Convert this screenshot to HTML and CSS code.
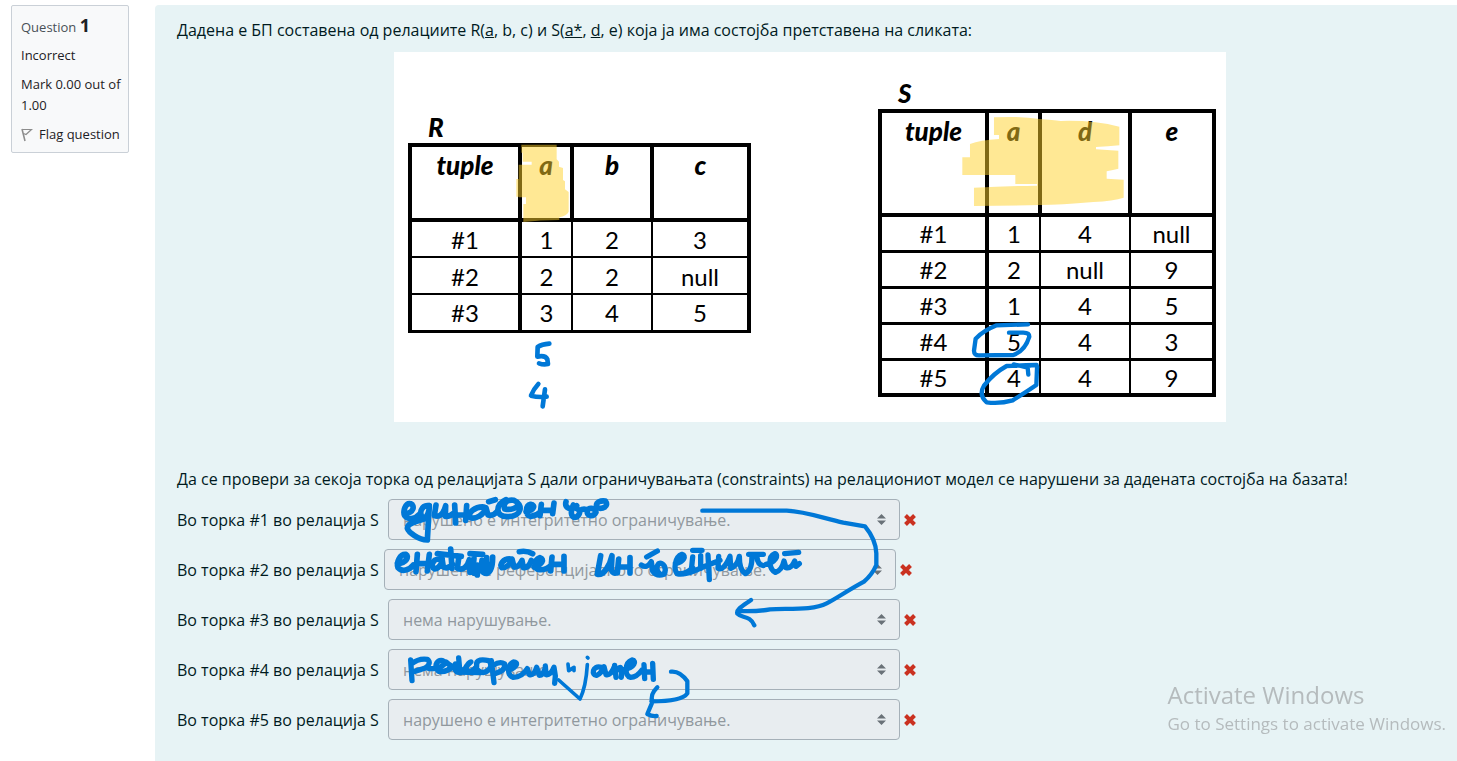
FILE: index.html
```
<!DOCTYPE html>
<html lang="mk">
<head>
<meta charset="utf-8">
<title>Question 1</title>
<link rel="stylesheet" href="styles.css">
</head>
<body>
<main class="question">
  <aside class="info" lang="en">
    <h3 class="info__title">Question <b>1</b></h3>
    <p class="info__line">Incorrect</p>
    <p class="info__line">Mark 0.00 out of 1.00</p>
    <a class="info__flag" href="#">
      <svg width="12" height="14" viewBox="0 0 12 14" fill="none" stroke="#8c8c8c" stroke-width="1.5" aria-hidden="true"><path d="M1 1 4 13"/><path d="M1.500 1.500H10.500L5 6.500 2.500 5.500" stroke-width="1.200"/></svg>
      Flag question
    </a>
  </aside>

  <section class="content">
    <p class="text">Дадена е БП составена од релациите R(<u>a</u>, b, c) и S(<u>a*</u>, <u>d</u>, e) која ја има состојба претставена на сликата:</p>

    <figure class="board">
      <table class="rel rel--r">
        <caption>R</caption>
        <colgroup><col class="w-tuple"><col class="w-a"><col class="w-b"><col class="w-c"></colgroup>
        <thead><tr><th>tuple</th><th>a</th><th>b</th><th>c</th></tr></thead>
        <tbody>
          <tr><td>#1</td><td>1</td><td>2</td><td>3</td></tr>
          <tr><td>#2</td><td>2</td><td>2</td><td>null</td></tr>
          <tr><td>#3</td><td>3</td><td>4</td><td>5</td></tr>
        </tbody>
      </table>
      <table class="rel rel--s">
        <caption>S</caption>
        <colgroup><col class="w-tuple"><col class="w-a"><col class="w-d"><col class="w-e"></colgroup>
        <thead><tr><th>tuple</th><th>a</th><th>d</th><th>e</th></tr></thead>
        <tbody>
          <tr><td>#1</td><td>1</td><td>4</td><td>null</td></tr>
          <tr><td>#2</td><td>2</td><td>null</td><td>9</td></tr>
          <tr><td>#3</td><td>1</td><td>4</td><td>5</td></tr>
          <tr><td>#4</td><td>5</td><td>4</td><td>3</td></tr>
          <tr><td>#5</td><td>4</td><td>4</td><td>9</td></tr>
        </tbody>
      </table>
      <svg class="ink ink--board" viewBox="394 52 832 370" aria-hidden="true">
        <g transform="translate(390 100) scale(.33333)">
          <path class="marker" d="M394 134H500V178L507 185V200L519 204V240L525 244V268L536 276V335Q530 348 508 352V360Q450 360 400 366V312H408V292H386V290H379V237H386V194H425V185H398V158H394Z"/>
          <g class="pen" stroke-width="14">
            <path d="M478 731Q455 733 443 741L442 770Q466 765 472 778L474 792Q460 795 447 790"/>
            <path d="M445 852Q430 868 423 887Q445 893 470 890M465 868L458 919"/>
          </g>
        </g>
        <g transform="translate(860 70) scale(.33333)">
          <path class="marker" d="M402 142Q480 138 538 147Q580 150 602 153Q700 150 778 170V226Q745 230 708 231V238L775 242V296Q760 300 740 304V326L791 329V383Q760 393 700 396Q600 405 540 405Q450 408 342 408V353Q440 348 531 347V342H466V315H307V262H330V222Q360 210 417 207V195H402Z"/>
          <g class="pen" stroke-width="13">
            <path d="M504 763L410 766Q370 782 347 806L342 842Q342 857 358 856L460 855Q495 843 508 800Q508 788 490 788H447"/>
            <path d="M461 883L503 893L505 914M505 888Q535 880 531 895L529 945Q500 965 458 991Q420 1002 380 997Q355 975 372 947Q400 910 440 888Q480 886 530 885"/>
          </g>
        </g>
      </svg>
    </figure>

    <p class="text">Да се провери за секоја торка од релацијата S дали ограничувањата (constraints) на релациониот модел се нарушени за дадената состојба на базата!</p>

    <form class="answers">
      <div class="answer">
        <label for="q1">Во торка #1 во релација S</label>
        <span class="pick"><select id="q1" disabled><option>нарушено е интегритетно ограничување.</option></select><svg class="pick__arrows" viewBox="0 0 9 11" aria-hidden="true"><path d="M4.500 0 9 4.500H0ZM4.500 11 0 6.500H9Z"/></svg></span>
        <svg class="wrong" viewBox="0 0 14 14" role="img" aria-label="Incorrect"><path d="M2.500 2.500 11.500 11.500M11.500 2.500 2.500 11.500"/></svg>
      </div>
      <div class="answer answer--tight">
        <label for="q2">Во торка #2 во релација S</label>
        <span class="pick"><select id="q2" disabled><option>нарушено е референцијалното ограничување.</option></select><svg class="pick__arrows" viewBox="0 0 9 11" aria-hidden="true"><path d="M4.500 0 9 4.500H0ZM4.500 11 0 6.500H9Z"/></svg></span>
        <svg class="wrong" viewBox="0 0 14 14" role="img" aria-label="Incorrect"><path d="M2.500 2.500 11.500 11.500M11.500 2.500 2.500 11.500"/></svg>
      </div>
      <div class="answer">
        <label for="q3">Во торка #3 во релација S</label>
        <span class="pick"><select id="q3" disabled><option>нема нарушување.</option></select><svg class="pick__arrows" viewBox="0 0 9 11" aria-hidden="true"><path d="M4.500 0 9 4.500H0ZM4.500 11 0 6.500H9Z"/></svg></span>
        <svg class="wrong" viewBox="0 0 14 14" role="img" aria-label="Incorrect"><path d="M2.500 2.500 11.500 11.500M11.500 2.500 2.500 11.500"/></svg>
      </div>
      <div class="answer">
        <label for="q4">Во торка #4 во релација S</label>
        <span class="pick"><select id="q4" disabled><option>нема нарушување.</option></select><svg class="pick__arrows" viewBox="0 0 9 11" aria-hidden="true"><path d="M4.500 0 9 4.500H0ZM4.500 11 0 6.500H9Z"/></svg></span>
        <svg class="wrong" viewBox="0 0 14 14" role="img" aria-label="Incorrect"><path d="M2.500 2.500 11.500 11.500M11.500 2.500 2.500 11.500"/></svg>
      </div>
      <div class="answer">
        <label for="q5">Во торка #5 во релација S</label>
        <span class="pick"><select id="q5" disabled><option>нарушено е интегритетно ограничување.</option></select><svg class="pick__arrows" viewBox="0 0 9 11" aria-hidden="true"><path d="M4.500 0 9 4.500H0ZM4.500 11 0 6.500H9Z"/></svg></span>
        <svg class="wrong" viewBox="0 0 14 14" role="img" aria-label="Incorrect"><path d="M2.500 2.500 11.500 11.500M11.500 2.500 2.500 11.500"/></svg>
      </div>

      <svg class="ink ink--answers" viewBox="177 495 760 250" aria-hidden="true">
        <g class="pen" stroke-width="17" transform="translate(380 485) scale(.33333)">
          <path d="M76 85C100 85 106 62 92 56C76 52 68 80 74 92C84 106 106 102 118 88"/>
          <path d="M146 62C122 58 116 90 130 98C144 98 148 75 148 62L142 165C115 164 86 142 82 130C82 112 115 108 145 98"/>
          <path d="M168 60L163 92C178 98 190 88 197 62L196 94Q208 96 222 84M224 60L227 114M224 90L262 90M260 62L257 106"/>
          <path d="M312 66C285 64 262 84 270 98C286 104 312 90 318 68L324 90Q340 94 353 78M326 50L346 44"/>
          <path d="M378 44C345 58 345 95 382 95C428 94 430 58 402 46C380 42 368 56 374 72C392 76 412 70 414 58"/>
          <path d="M438 80C462 76 468 60 452 58C436 62 434 92 452 94Q470 92 482 80M484 58L480 92M482 76H516M522 54L518 86"/>
          <path d="M558 50C552 72 575 76 590 62M580 60C568 86 576 100 590 96C604 84 600 74 588 70M598 78Q612 68 622 76C618 94 640 98 648 82C644 66 626 68 622 76"/>
          <path d="M650 66C646 50 664 46 676 48C688 64 668 74 650 68"/>
          <path d="M52 236C80 234 88 214 78 208C60 206 48 232 54 248C66 262 88 256 100 240M112 208L108 260M110 236H142M148 208L142 258"/>
          <path d="M178 222C156 222 150 246 164 252C180 250 188 230 186 220L190 246Q202 254 218 238M212 192L216 250M172 206L244 214"/>
          <path d="M236 220L232 250C248 258 262 246 268 224L270 262M282 220L278 262C290 274 304 256 306 226L310 262C328 274 338 250 338 216M270 206L308 208M292 240V270M320 218V256"/>
          <path d="M392 222C370 220 356 240 366 248C384 248 394 232 396 222L402 246Q416 248 426 226L430 248Q446 250 454 226M418 200Q440 196 458 206"/>
          <path d="M462 246C488 238 494 222 480 218C460 226 460 252 478 254Q498 256 514 240M516 216L512 258M516 238H548M552 214L552 258"/>
          <path d="M662 212L652 268C672 272 690 240 696 212L694 254Q700 270 712 262M716 222L712 264M714 246H744M750 218V264"/>
        </g>
        <g class="pen" stroke-width="16" transform="translate(640 485) scale(.33333)">
          <path d="M4 240Q20 252 34 230L38 258Q50 276 72 268C82 250 70 230 56 236Q42 254 62 268M20 216L52 198"/>
          <path d="M106 236C132 230 140 212 126 208C104 216 100 254 112 266Q138 270 158 248M158 216L154 256M182 212V250M158 196H186"/>
          <path d="M112 266Q140 270 180 250L240 226M204 210L208 284M236 214L234 250Q252 258 270 214L272 244"/>
          <path d="M272 250Q292 244 298 214Q298 256 316 266Q336 258 336 214M326 208L370 208M350 210Q352 240 370 242"/>
          <path d="M378 238C406 232 418 210 404 206C384 214 386 252 406 262Q426 256 432 228L438 248Q454 252 464 228L468 244L478 236M434 206L476 202"/>
          <path stroke-width="13" d="M187 77H440C500 80 550 100 610 113L675 124C695 148 708 175 709 205V240Q697 268 672 290C620 318 590 340 560 355C520 376 450 370 390 373Q355 380 295 378M333 345C310 361 288 372 292 386C304 400 330 390 343 421"/>
        </g>
        <g class="pen" stroke-width="16" transform="translate(380 640) scale(.33333)">
          <path d="M92 60L96 122M94 72Q116 54 142 58Q156 70 136 84L104 94"/>
          <path d="M148 86C182 86 206 70 188 62C166 58 162 84 176 94Q200 98 220 78M198 66Q214 82 236 84M236 54L240 98M226 72C216 100 246 104 260 78Q282 58 266 70C246 92 270 104 286 84"/>
          <path d="M290 78C286 56 310 58 326 62C344 80 320 102 302 96Q286 90 290 76M334 62L342 128M340 76Q360 62 374 72Q378 90 348 100M232 96L300 98"/>
          <path d="M386 90C412 82 416 66 400 66C382 76 380 106 400 112Q426 112 442 86L448 104Q462 108 470 82L478 106Q490 106 496 82M496 78L498 104Q512 106 522 82L526 108L524 130"/>
          <path stroke-width="11" d="M536 120L600 177Q618 140 622 74M622 52L624 54M564 72L566 92L582 82V92"/>
          <path d="M664 82C636 74 634 108 650 106Q664 100 672 80L678 104Q692 108 704 78M704 76L708 112M712 90Q728 68 724 112"/>
          <path d="M734 88C762 84 772 62 756 60C734 68 732 108 752 112Q770 112 786 90M792 74L794 116M794 96H818M818 70L820 118"/>
          <path stroke-width="13" d="M873 95Q900 92 922 124V160C910 178 860 184 814 184M832 142Q808 166 818 184L802 222Q816 230 830 228"/>
        </g>
      </svg>
    </form>
  </section>
</main>
<aside class="activate" lang="en">
  <p class="activate__title">Activate Windows</p>
  <p class="activate__hint">Go to Settings to activate Windows.</p>
</aside>
</body>
</html>
```
FILE: styles.css
```
* { box-sizing: border-box; }
body {
  margin: 0;
  background: #fff;
  color: #1d2125;
  font: 16px/22px "Open Sans", "Noto Sans", sans-serif;
}
p, h3, figure { margin: 0; }

.question {
  display: flex;
  align-items: flex-start;
  gap: 26px;
  min-height: 100vh;
  padding: 5px 0 0 11px;
}

.info {
  flex: none;
  width: 118px;
  padding: 8px 0 7px 9px;
  border: 1px solid #cad0d7;
  border-radius: 2px;
  background: #f8f9fa;
  font-size: 13px;
  line-height: 21px;
}
.info__title { color: #495057; font-size: 13px; font-weight: 400; line-height: 22px; }
.info__title b { color: #1d2125; font-size: 18px; }
.info__line { margin-top: 8px; }
.info__title + .info__line { margin-top: 7px; }
.info__flag {
  display: flex;
  align-items: center;
  gap: 6px;
  margin-top: 8px;
  color: inherit;
  text-decoration: none;
  white-space: nowrap;
}
.info__flag svg { flex: none; }

.content {
  flex: 1;
  align-self: stretch;
  padding: 14px 14px 0 22px;
  border-top-left-radius: 4px;
  background: #e7f3f5;
  color: #001a1e;
}

.board {
  position: relative;
  display: flex;
  justify-content: space-between;
  align-items: flex-start;
  width: 832px;
  margin: 11px auto 46px;
  padding: 26px 10px 25px 14px;
  background: #fff;
}
.rel {
  border-collapse: collapse;
  table-layout: fixed;
  border: 4px solid #000;
  color: #000;
  font: 24px/28px Lato, sans-serif;
  text-align: center;
}
.rel caption {
  padding-left: 20px;
  font-size: 26px;
  font-style: italic;
  font-weight: 900;
  line-height: 31px;
  text-align: left;
}
.rel th {
  padding: 4px 0 0;
  border: 4px solid #000;
  font-size: 26px;
  font-style: italic;
  font-weight: 900;
  vertical-align: top;
}
.rel td { padding: 2px 0 0; border: 2px solid #000; }
.rel tr > :first-child { border-right-width: 4px; }
.rel--r { width: 343px; margin-top: 34px; border-bottom-width: 3px; }
.rel--r thead tr { height: 75px; }
.rel--r tbody tr { height: 37px; }
.rel--s { width: 338px; }
.rel--s td { border-width: 3px 2px; }
.rel--s thead tr { height: 104px; }
.rel--s tbody tr { height: 36px; }
.rel--r .w-tuple { width: 110px; }
.rel--r .w-a { width: 52px; }
.rel--r .w-b { width: 80px; }
.rel--s .w-tuple { width: 107px; }
.rel--s .w-a { width: 53px; }
.rel--s .w-d { width: 90px; }

.answers {
  position: relative;
  display: grid;
  gap: 9px;
  margin-top: 9px;
}
.answer { display: flex; align-items: center; }
.answer label { width: 203px; margin-right: 8px; white-space: nowrap; }
.answer--tight label { margin-right: 4px; }
.pick { position: relative; flex: 0 1 512px; }
.pick select {
  display: block;
  width: 100%;
  height: 41px;
  padding: 0 28px 0 14px;
  border: 1px solid #a5b0b8;
  border-radius: 4px;
  background: #e8edf0;
  color: #90989e;
  font: inherit;
  opacity: 1;
  appearance: none;
}
.pick__arrows {
  position: absolute;
  top: 15px;
  right: 14px;
  width: 9px;
  height: 11px;
  fill: #6a7278;
}
.wrong {
  flex: none;
  width: 14px;
  height: 14px;
  margin-left: 3px;
  fill: none;
  stroke: #ca3120;
  stroke-width: 4;
}

.ink { position: absolute; pointer-events: none; }
.ink--board { inset: 0; width: 100%; height: 100%; }
.ink--answers { top: -4px; left: 0; width: 760px; height: 250px; }
.marker { fill: #ffd129; fill-opacity: .5; }
.pen {
  fill: none;
  stroke: #0078d7;
  stroke-linecap: round;
  stroke-linejoin: round;
}

.activate {
  position: fixed;
  right: 11px;
  bottom: 24px;
  color: #b5bbbd;
}
.activate__title { font-size: 24px; line-height: 32px; }
.activate__hint { font-size: 17px; line-height: 26px; }
```
